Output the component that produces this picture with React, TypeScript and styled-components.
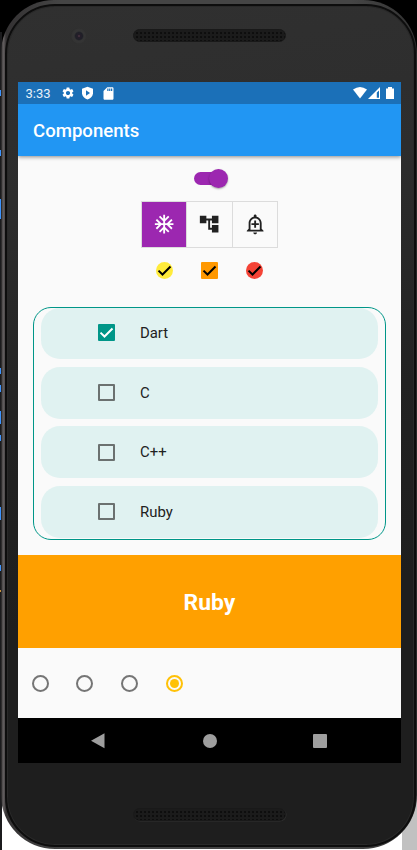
import React, { useState } from 'react';
import styled, { createGlobalStyle } from 'styled-components';
import { MdAcUnit, MdAccountTree, MdOutlineAddAlert, MdSettings, MdSdCard } from 'react-icons/md';

const GlobalStyle = createGlobalStyle`
  * { box-sizing: border-box; }
  body { margin: 0; background: #000; font-family: Roboto, sans-serif; overflow: hidden; }
  button { font: inherit; border: 0; padding: 0; background: none; cursor: pointer; }
  svg { display: block; }
`;

const blue = '#3d94ff';
const Desk = styled.div`
  width: 417px;
  height: 850px;
  padding: 0 0 0 1px;
  overflow: hidden;
  background:
    linear-gradient(${blue}, ${blue}) 0 90px / 1px 6px no-repeat,
    linear-gradient(${blue}, ${blue}) 0 150px / 1px 6px no-repeat,
    linear-gradient(${blue}, ${blue}) 0 199px / 1px 20px no-repeat,
    linear-gradient(${blue}, ${blue}) 0 368px / 1px 6px no-repeat,
    linear-gradient(${blue}, ${blue}) 0 385px / 1px 7px no-repeat,
    linear-gradient(${blue}, ${blue}) 0 411px / 1px 13px no-repeat,
    linear-gradient(${blue}, ${blue}) 0 435px / 1px 6px no-repeat,
    linear-gradient(${blue}, ${blue}) 0 507px / 1px 13px no-repeat,
    linear-gradient(${blue}, ${blue}) 0 565px / 1px 6px no-repeat,
    linear-gradient(#c9923b, #c9923b) 0 590px / 1px 2px no-repeat,
    linear-gradient(#1b1b1d, #1b1b1d) 0 32px / 2px 818px no-repeat,
    linear-gradient(#c1c1c1, #c1c1c1) 402px 780px / 15px 70px no-repeat,
    linear-gradient(#fff, #fff) 2px 780px / 400px 70px no-repeat,
    #000;
`;

const Phone = styled.div`
  width: 416px;
  height: 849px;
  padding: 1px;
  border-radius: 53px 54px 54px 54px;
  background: linear-gradient(90deg, #1d1c1c 0, #625e5f 2px, #5c5859 3px, #343233 5px, #454545 60px, #454545 350px, #333 412px, #272727 415px);
`;

const Bezel = styled.div`
  width: 411px;
  height: 843px;
  margin: 3px 0 0 3px;
  border-radius: 50px;
  border: 2px solid #0d0d0d;
  box-shadow: inset 0 0 0 1px #292929;
  padding: 0 12px;
  background: linear-gradient(172deg, #303030 0%, #2d2d2d 22%, #222 48%, #1e1e1e 70%, #1e1e1e 100%);
  display: flex;
  flex-direction: column;
`;

const Top = styled.div`
  height: 76px;
  padding: 23px 0 0 51px;
  display: flex;
  align-items: flex-start;
`;

const Camera = styled.div`
  width: 16px;
  height: 16px;
  margin-right: 47px;
  margin-top: -1px;
  border-radius: 50%;
  background: radial-gradient(circle at 9px 8px, #553a47 0, #251e2a 1.5px, #1f1f27 3.5px, #353535 5px, #333 7px, #2e2e2e 8px);
`;

const Speaker = styled.div`
  width: 153px;
  height: 13px;
  border-radius: 7px;
  border: 1px solid #191919;
  box-shadow: .5px .5px 0 #303030;
  background: radial-gradient(circle, #0a0a0a 0 .6px, transparent 1.1px) 1px 1px / 4px 4px, #1b1b1b;
`;

const Bottom = styled.div`
  padding: 45px 0 0 114px;
`;

const Screen = styled.main`
  width: 383px;
  height: 681px;
  margin-left: -1px;
  background: #fafafa;
  display: flex;
  flex-direction: column;
  flex-shrink: 0;
`;

const StatusBar = styled.div`
  height: 22px;
  background: #1b70b8;
  color: #fff;
  display: flex;
  align-items: center;
  padding: 0 7px 0 7.5px;
  font-size: 13px;
  line-height: 22px;
  svg { flex: none; }
`;

const Clock = styled.span`
  width: 35px;
  padding-top: 1px;
  color: #e8f1f8;
`;

const StatusIcons = styled.div<{ $end?: boolean }>`
  display: flex;
  align-items: center;
  gap: ${p => (p.$end ? '0' : '6.5px')};
  margin-left: ${p => (p.$end ? 'auto' : '0')};
`;

const AppBar = styled.header`
  height: 52px;
  background: #2196f3;
  color: #fff;
  padding: 2px 15px 0;
  display: flex;
  align-items: center;
  box-shadow: 0 1px 4px rgba(0, 0, 0, .45);
  clip-path: inset(0 0 -8px 0);
`;

const Title = styled.h1`
  margin: 0;
  font-size: 18.6px;
  font-weight: 500;
`;

const Switch = styled.button`
  width: 34px;
  height: 19px;
  margin: 13px 0 0 176px;
  display: flex;
  align-items: center;
`;

const Track = styled.span<{ $on: boolean }>`
  width: 31px;
  height: 13px;
  border-radius: 7px;
  background: ${p => (p.$on ? '#9c27b0' : '#9e9e9e')};
  display: flex;
  align-items: center;
  justify-content: ${p => (p.$on ? 'flex-end' : 'flex-start')};
`;

const Thumb = styled.span<{ $on: boolean }>`
  width: 19px;
  height: 19px;
  flex: none;
  margin-right: -3px;
  border-radius: 50%;
  background: ${p => (p.$on ? '#9c27b0' : '#fafafa')};
  box-shadow: 0 1px 2px rgba(0, 0, 0, .35);
`;

const ToggleGroup = styled.div`
  width: 137px;
  height: 47px;
  margin: 13px 0 0 123px;
  border: 1px solid #dcdcdc;
  display: flex;
`;

const Toggle = styled.button<{ $on: boolean }>`
  flex: 1;
  display: flex;
  align-items: center;
  justify-content: center;
  color: ${p => (p.$on ? '#fff' : '#212121')};
  background: ${p => (p.$on ? '#9c27b0' : 'transparent')};
  & + & { border-left: 1px solid #dcdcdc; }
`;

const CheckRow = styled.div`
  display: flex;
  gap: 27.7px;
  padding: 13.5px 0 0 138.3px;
`;

const ColorCheck = styled.button<{ $color: string; $round?: boolean }>`
  width: 17px;
  height: 17px;
  border-radius: ${p => (p.$round ? '50%' : '1px')};
  background: ${p => p.$color};
`;

const List = styled.section`
  width: 353px;
  height: 233px;
  margin: 28.5px 0 0 15px;
  border: 1px solid #009688;
  border-radius: 18px;
  padding: 0 7px;
  display: flex;
  flex-direction: column;
  gap: 7.5px;
  overflow: hidden;
`;

const Item = styled.button`
  height: 52px;
  flex: none;
  border-radius: 19px;
  background: #e0f2f1;
  display: flex;
  align-items: center;
  padding-left: 57px;
  color: #212121;
  &:first-child { height: 51px; padding-bottom: 2px; }
`;

const Box = styled.span<{ $on: boolean }>`
  width: 17px;
  height: 17px;
  border-radius: 1px;
  border: ${p => (p.$on ? '0' : '2px solid #6b7170')};
  background: ${p => (p.$on ? '#009688' : 'transparent')};
`;

const Label = styled.span`
  margin-left: 25px;
  font-size: 14.9px;
`;

const Banner = styled.div`
  height: 93px;
  margin-top: 15px;
  background: #ffa000;
  color: #fff;
  font-size: 22.9px;
  font-weight: 700;
  display: flex;
  align-items: center;
  justify-content: center;
  padding: 1px 0 0 0;
`;

const Radios = styled.div`
  flex: 1;
  display: flex;
  align-items: center;
  gap: 27.7px;
  padding-left: 13.8px;
`;

const Radio = styled.button<{ $on: boolean }>`
  width: 17px;
  height: 17px;
  border-radius: 50%;
  border: 2px solid ${p => (p.$on ? '#ffc107' : '#757575')};
  display: flex;
  align-items: center;
  justify-content: center;
  &::after {
    content: '';
    width: 9px;
    height: 9px;
    border-radius: 50%;
    background: ${p => (p.$on ? '#ffc107' : 'transparent')};
  }
`;

const NavBar = styled.nav`
  height: 45px;
  background: #000;
  display: flex;
  align-items: center;
  padding-left: 73px;
  gap: 96.5px;
`;

const Tick = ({ color }: { color: string }) => (
  <svg width="17" height="17" viewBox="0 0 17 17" fill="none" stroke={color} strokeWidth="2">
    <path d="M2.5 8.6 6.5 12.5 14.5 4.5" />
  </svg>
);

const languages = ['Dart', 'C', 'C++', 'Ruby'];
const toggles = [MdAcUnit, MdAccountTree, MdOutlineAddAlert];
const flags = [
  { color: '#ffeb3b', round: true },
  { color: '#ff9800', round: false },
  { color: '#f44336', round: true },
];

export default function App() {
  const [on, setOn] = useState(true);
  const [tool, setTool] = useState(0);
  const [marks, setMarks] = useState([true, true, true]);
  const [picked, setPicked] = useState([true, false, false, false]);
  const [radio, setRadio] = useState(3);
  const flip = (list: boolean[], i: number) => list.map((v, k) => (k === i ? !v : v));

  return (
    <Desk>
      <GlobalStyle />
      <Phone>
        <Bezel>
          <Top>
            <Camera />
            <Speaker />
          </Top>
          <Screen>
            <StatusBar>
              <Clock>3:33</Clock>
              <StatusIcons>
                <MdSettings size={14} />
                <svg width="13" height="14" viewBox="0 0 13 14">
                  <path d="M6.5 .8 12 2.8v4.400c0 3-2.300 5.200-5.500 6.300C3.300 12.400 1 10.200 1 7.200V2.800z" fill="#fff" />
                  <path d="M5 4.300 9 7 5 9.700z" fill="#1b70b8" />
                </svg>
                <MdSdCard size={15} />
              </StatusIcons>
              <StatusIcons $end>
                <svg width="41" height="14" viewBox="0 0 41 14" fill="#fff">
                  <path d="M0 3.500Q7-1.500 14 3.500L7 12.500z" />
                  <path d="M15 13 27 1v12z" />
                  <path d="M23.800 6.500 26 4.500v7.300h-2.200z" fill="#1b70b8" />
                  <path d="M33 2.500h2V1h4v1.500h2V13h-8z" />
                </svg>
              </StatusIcons>
            </StatusBar>
            <AppBar>
              <Title>Components</Title>
            </AppBar>
            <Switch aria-label="Switch" onClick={() => setOn(!on)}>
              <Track $on={on}><Thumb $on={on} /></Track>
            </Switch>
            <ToggleGroup>
              {toggles.map((Icon, i) => (
                <Toggle key={i} $on={tool === i} onClick={() => setTool(i)}>
                  <Icon size={22.3} />
                </Toggle>
              ))}
            </ToggleGroup>
            <CheckRow>
              {flags.map((f, i) => (
                <ColorCheck key={f.color} $color={f.color} $round={f.round} onClick={() => setMarks(flip(marks, i))}>
                  {marks[i] && <Tick color="#000" />}
                </ColorCheck>
              ))}
            </CheckRow>
            <List>
              {languages.map((name, i) => (
                <Item key={name} onClick={() => setPicked(flip(picked, i))}>
                  <Box $on={picked[i]}>{picked[i] && <Tick color="#fff" />}</Box>
                  <Label>{name}</Label>
                </Item>
              ))}
            </List>
            <Banner>{languages[radio]}</Banner>
            <Radios>
              {languages.map((name, i) => (
                <Radio key={name} aria-label={name} $on={radio === i} onClick={() => setRadio(i)} />
              ))}
            </Radios>
            <NavBar>
              <svg width="15" height="16" viewBox="0 0 15 16"><path d="M0 7.800 13.500 .3v15z" fill="#9e9e9e" /></svg>
              <svg width="14" height="14" viewBox="0 0 14 14"><circle cx="7" cy="7" r="7" fill="#9e9e9e" /></svg>
              <svg width="14" height="14" viewBox="0 0 14 14"><rect width="14" height="14" rx="1" fill="#9e9e9e" /></svg>
            </NavBar>
          </Screen>
          <Bottom>
            <Speaker />
          </Bottom>
        </Bezel>
      </Phone>
    </Desk>
  );
}
